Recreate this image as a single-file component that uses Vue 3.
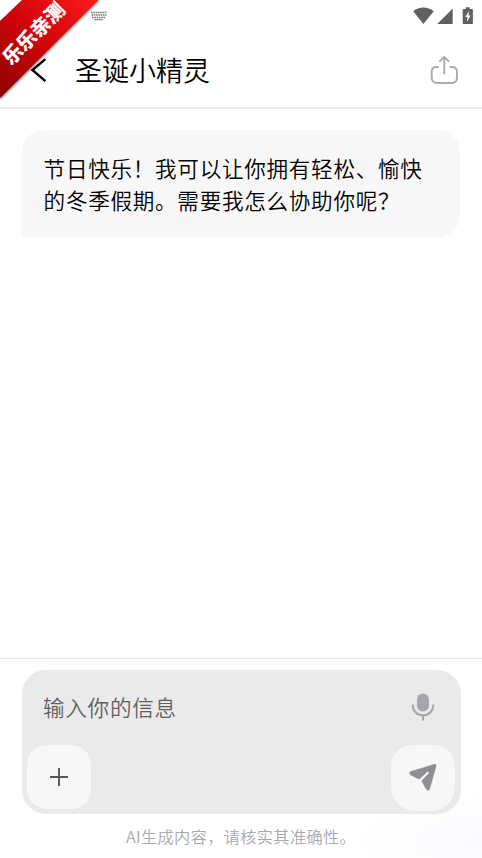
<script setup>
const title = '圣诞小精灵'
const lines = ['节日快乐！我可以让你拥有轻松、愉快', '的冬季假期。需要我怎么协助你呢？']
</script>

<template>
  <div class="screen">
    <div class="status">
      <svg class="keyboard" width="18" height="10" viewBox="0 0 18 10">
        <path d="M1 1.5H17M1.5 4H16.5M2 6.4H16" stroke="#777" stroke-width="1.5" stroke-dasharray="1.6 .7" />
        <path d="M4 8.7H13" stroke="#777" stroke-width="1" />
      </svg>
      <svg class="signals" width="62" height="18" viewBox="0 0 62 18" fill="#616161">
        <path d="M.2 4.2C6.2-.7 14.7-.7 20.7 4.2L10.4 17Z" />
        <path d="M39.7 1.5V17H24.2Z" />
        <path d="M52.7 .3h4V2h2.3q.9 0 .9.9V16q0 1-.9 1h-8.4q-.9 0-.9-1V2.9q0-.9.9-.9H52.7Z" />
        <path d="M56.2 4L52.2 10h2.2l-.6 5 3.9-6.6h-2.2Z" fill="#fff" />
      </svg>
    </div>

    <header class="header">
      <svg class="back" width="18" height="26" viewBox="0 0 18 26" fill="none" stroke="#000" stroke-width="2.4">
        <path d="M15.4 2.2L2.4 13L15.4 24.2" />
      </svg>
      <h1>{{ title }}</h1>
      <svg class="share" width="28" height="30" viewBox="0 0 28 30" fill="none" stroke="#aaaab0" stroke-width="1.9" stroke-linecap="round" stroke-linejoin="round">
        <path d="M8 12H6.5Q1.7 12 1.7 17V22.5Q1.7 28 7.2 28H21.5Q27 28 27 22.5V17Q27 12 21.7 12H20.5" />
        <path d="M14.3 18.5V2M10 6.2L14.3 1.8L18.6 6.2" />
      </svg>
    </header>

    <main class="chat">
      <div class="bubble">
        <div v-for="line in lines" :key="line">{{ line }}</div>
      </div>
    </main>

    <footer class="composer">
      <div class="box">
        <div class="input-row">
          <span class="placeholder">输入你的信息</span>
          <svg width="24" height="28" viewBox="0 0 24 28">
            <rect x="6" y=".5" width="12" height="18" rx="6" fill="#a5a5aa" />
            <path d="M1.8 11.5V12.5A10.2 9.8 0 0 0 22.2 12.5V11.5M12 22.4V27.5" fill="none" stroke="#a5a5aa" stroke-width="2" />
          </svg>
        </div>
        <div class="buttons">
          <button class="btn" aria-label="添加">
            <svg width="20" height="20" viewBox="0 0 20 20" stroke="#55555a" stroke-width="1.9">
              <path d="M1 10H19M10 1V19" />
            </svg>
          </button>
          <button class="btn send" aria-label="发送">
            <svg width="28" height="28" viewBox="0 0 28 28" fill="#8e8e93" stroke="#8e8e93" stroke-linejoin="round">
              <path d="M1.2 7.7L25.2 .3Q27.7 0 27 2.6L20.7 25Q19.5 27.7 17.4 25.4L12.6 17L20 9.2Q20.4 7.3 18.5 7.6L10.3 15.2L1.7 11Q-.2 9 1.2 7.7Z" stroke-width=".4" />
            </svg>
          </button>
        </div>
      </div>
      <p class="note">AI生成内容，请核实其准确性。</p>
    </footer>

    <div class="ribbon">
      <svg width="106" height="106" viewBox="0 0 106 106">
        <defs>
          <linearGradient id="red" x1="0" y1="99" x2="99" y2="0" gradientUnits="userSpaceOnUse">
            <stop offset="0" stop-color="#8c0000" />
            <stop offset=".5" stop-color="#cf0509" />
            <stop offset="1" stop-color="#ff1a1a" />
          </linearGradient>
          <filter id="soft"><feGaussianBlur stdDeviation="1.2" /></filter>
        </defs>
        <path d="M22 0H100L0 100V20Z" fill="#000" opacity=".5" filter="url(#soft)" />
        <path d="M0 0H22L0 21Z" fill="#fff" />
        <path d="M22 0H98.5L0 98V21Z" fill="url(#red)" />
      </svg>
      <span class="ribbon-text">乐乐亲测</span>
    </div>
  </div>
</template>

<style>
body { background: #fff; overflow: hidden; }
</style>

<style scoped>
.screen {
  position: relative;
  display: flex;
  flex-direction: column;
  width: 482px;
  height: 858px;
  overflow: hidden;
  background: #fff;
  font-family: "Noto Sans CJK SC", sans-serif;
  font-weight: 350;
}
.status {
  display: flex;
  justify-content: space-between;
  align-items: flex-start;
  height: 32px;
  padding: 7px 7px 0 90px;
  box-sizing: border-box;
}
.keyboard { margin-top: 4px; }
.header {
  display: flex;
  align-items: center;
  height: 77px;
  padding: 0 24px 0 30px;
  box-sizing: border-box;
  border-bottom: 2px solid #e9e9e9;
}
h1 {
  flex: 1;
  margin: 0 0 0 27px;
  font-size: 27px;
  font-weight: 350;
  line-height: 40px;
}
.chat {
  flex: 1;
  padding: 21px 22px 0;
}
.bubble {
  height: 107px;
  padding: 22px 21.6px 0;
  box-sizing: border-box;
  border-radius: 22px 22px 22px 0;
  background: #f7f7f7;
  font-size: 21.6px;
  letter-spacing: .7px;
  line-height: 32px;
  white-space: nowrap;
}
.composer {
  height: 200px;
  padding: 11px 21px 0 22px;
  box-sizing: border-box;
  border-top: 1px solid #e2e2e2;
  background: radial-gradient(ellipse 130px 50px at 100% 92%, #faf9fd, #fff);
}
.box {
  height: 144px;
  padding: 23px 6px 0 5px;
  box-sizing: border-box;
  border-radius: 24px;
  background: #eaeaea;
}
.input-row {
  display: flex;
  justify-content: space-between;
  height: 52px;
  padding: 0 20px 0 16px;
}
.placeholder {
  color: #606064;
  font-size: 21.6px;
  letter-spacing: .7px;
  line-height: 28px;
}
.buttons {
  display: flex;
  justify-content: space-between;
}
.btn {
  display: flex;
  align-items: center;
  justify-content: center;
  width: 64px;
  height: 64px;
  padding: 0;
  border: 0;
  border-radius: 20px;
  background: #f7f7f7;
}
.send {
  height: 66px;
  border-radius: 21px 21px 24px 24px;
}
.note {
  margin: 10px 1px 0 0;
  color: #a9a9ae;
  font-size: 16.2px;
  letter-spacing: .35px;
  line-height: 24px;
  text-align: center;
}
.ribbon {
  position: absolute;
  top: 0;
  left: 0;
  width: 106px;
  height: 106px;
}
.ribbon-text {
  position: absolute;
  top: 18px;
  left: -8px;
  width: 82px;
  color: #fff;
  font-size: 19.6px;
  font-weight: 900;
  line-height: 30px;
  text-align: center;
  white-space: nowrap;
  transform: rotate(-45deg);
}
</style>
